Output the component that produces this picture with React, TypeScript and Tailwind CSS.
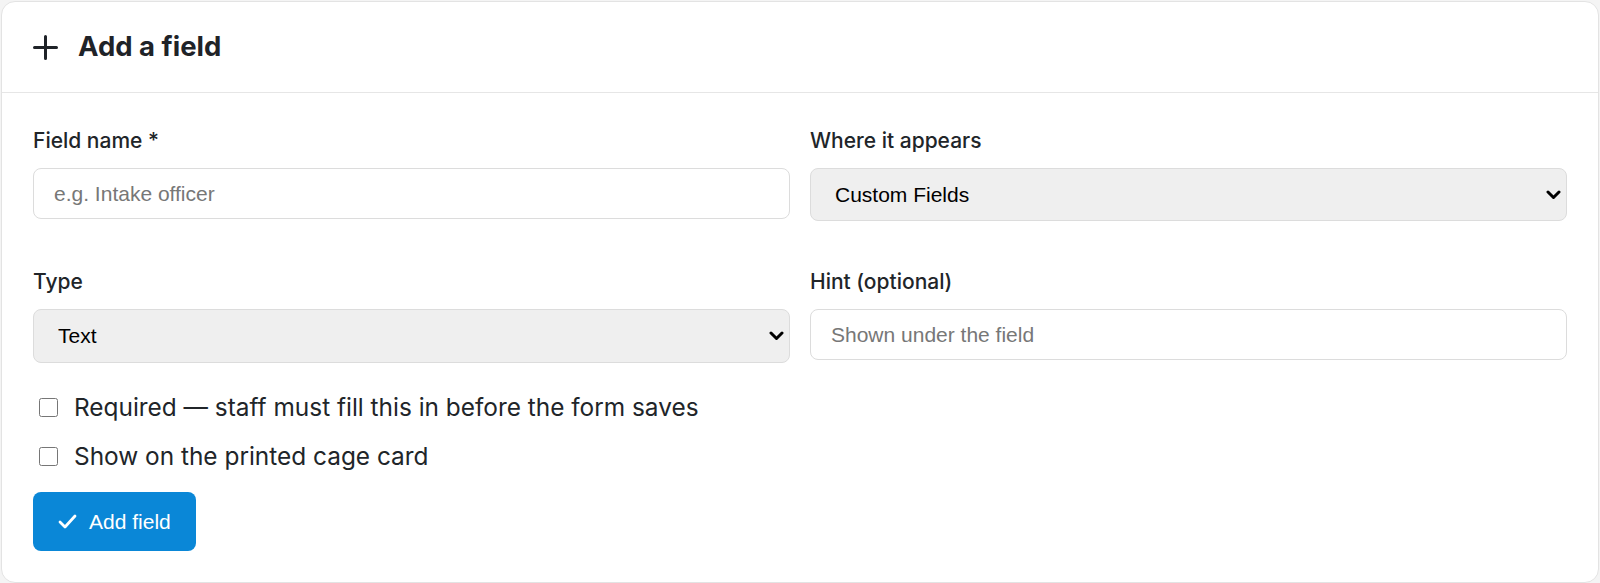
import { useState } from "react";

const LOCATIONS = ["Custom Fields", "Intake", "Medical", "Outcome"];
const TYPES = ["Text", "Number", "Date", "Yes / No", "Dropdown"];

function PlusIcon() {
  return (
    <svg width="25" height="25" viewBox="0 0 25 25" fill="none" stroke="currentColor" strokeWidth="3" strokeLinecap="round">
      <path d="M1.5 12.5h22M12.5 1.5v22" />
    </svg>
  );
}

function CheckIcon() {
  return (
    <svg width="19" height="19" viewBox="0 0 19 19" fill="none" stroke="currentColor" strokeWidth="2.8" strokeLinecap="round" strokeLinejoin="round">
      <path d="M2 10l5 5L17 4" />
    </svg>
  );
}

function Chevron() {
  return (
    <svg width="15" height="10" viewBox="0 0 15 10" fill="none" stroke="currentColor" strokeWidth="3" strokeLinecap="round" strokeLinejoin="round">
      <path d="M2 2l5.5 5.5L13 2" />
    </svg>
  );
}

function Label({ children }: { children: React.ReactNode }) {
  return (
    <label className="block text-[21px] leading-[26px] font-medium text-[#212529] mb-[14px] font-['Inter',sans-serif]">
      {children}
    </label>
  );
}

function Select({
  value,
  options,
  onChange,
  height,
}: {
  value: string;
  options: string[];
  onChange: (v: string) => void;
  height: string;
}) {
  return (
    <div className="relative">
      <select
        value={value}
        onChange={(e) => onChange(e.target.value)}
        className={`${height} block w-full appearance-none rounded-[8px] border border-[#dcdcdc] bg-[#efefef] pl-[24px] pr-10 text-[21px] text-black font-['Liberation_Sans',Arial,sans-serif] outline-none`}
      >
        {options.map((o) => (
          <option key={o}>{o}</option>
        ))}
      </select>
      <span className="pointer-events-none absolute right-[6px] top-1/2 -translate-y-1/2 text-black">
        <Chevron />
      </span>
    </div>
  );
}

export default function App() {
  const [name, setName] = useState("");
  const [where, setWhere] = useState(LOCATIONS[0]);
  const [type, setType] = useState(TYPES[0]);
  const [hint, setHint] = useState("");
  const [required, setRequired] = useState(false);
  const [printed, setPrinted] = useState(false);

  const inputCls =
    "block w-full h-[51px] px-5 rounded-[8px] border border-[#dcdcdc] bg-white text-[21px] text-[#212529] placeholder:text-[#777777] font-['Liberation_Sans',Arial,sans-serif] outline-none";

  return (
    <div className="min-h-screen bg-[#f4f4f4] p-px">
      <div className="rounded-[14px] border border-[#e3e3e3] bg-white">
        <div className="flex h-[91px] items-center gap-[20px] border-b border-[#e6e6e6] px-[31px] text-[#1f2328]">
          <PlusIcon />
          <h2 className="text-[27.5px] font-bold font-['Inter',sans-serif]">Add a field</h2>
        </div>

        <form className="px-[31px] pt-[35px] pb-[31px]" onSubmit={(e) => e.preventDefault()}>
          <div className="grid grid-cols-2 gap-x-5 gap-y-12">
            <div>
              <Label>Field name *</Label>
              <input
                value={name}
                onChange={(e) => setName(e.target.value)}
                placeholder="e.g. Intake officer"
                className={inputCls}
              />
            </div>
            <div>
              <Label>Where it appears</Label>
              <Select value={where} options={LOCATIONS} onChange={setWhere} height="h-[53px]" />
            </div>
            <div>
              <Label>Type</Label>
              <Select value={type} options={TYPES} onChange={setType} height="h-[54px]" />
            </div>
            <div>
              <Label>Hint (optional)</Label>
              <input
                value={hint}
                onChange={(e) => setHint(e.target.value)}
                placeholder="Shown under the field"
                className={inputCls}
              />
            </div>
          </div>

          <div className="mt-[28px] flex flex-col gap-[17px] font-['Inter',sans-serif] text-[24.4px] text-[#212529]">
            <label className="flex h-[32px] items-center gap-[16px]">
              <input
                type="checkbox"
                checked={required}
                onChange={(e) => setRequired(e.target.checked)}
                className="ml-[6px] h-[19px] w-[19px]"
              />
              Required — staff must fill this in before the form saves
            </label>
            <label className="flex h-[32px] items-center gap-[16px]">
              <input
                type="checkbox"
                checked={printed}
                onChange={(e) => setPrinted(e.target.checked)}
                className="ml-[6px] h-[19px] w-[19px]"
              />
              Show on the printed cage card
            </label>
          </div>

          <button
            type="submit"
            className="mt-[20px] flex h-[59px] items-center gap-[12px] rounded-[8px] bg-[#0a87d7] px-[25px] text-[21px] text-white font-['Liberation_Sans',Arial,sans-serif]"
          >
            <CheckIcon />
            Add field
          </button>
        </form>
      </div>
    </div>
  );
}
